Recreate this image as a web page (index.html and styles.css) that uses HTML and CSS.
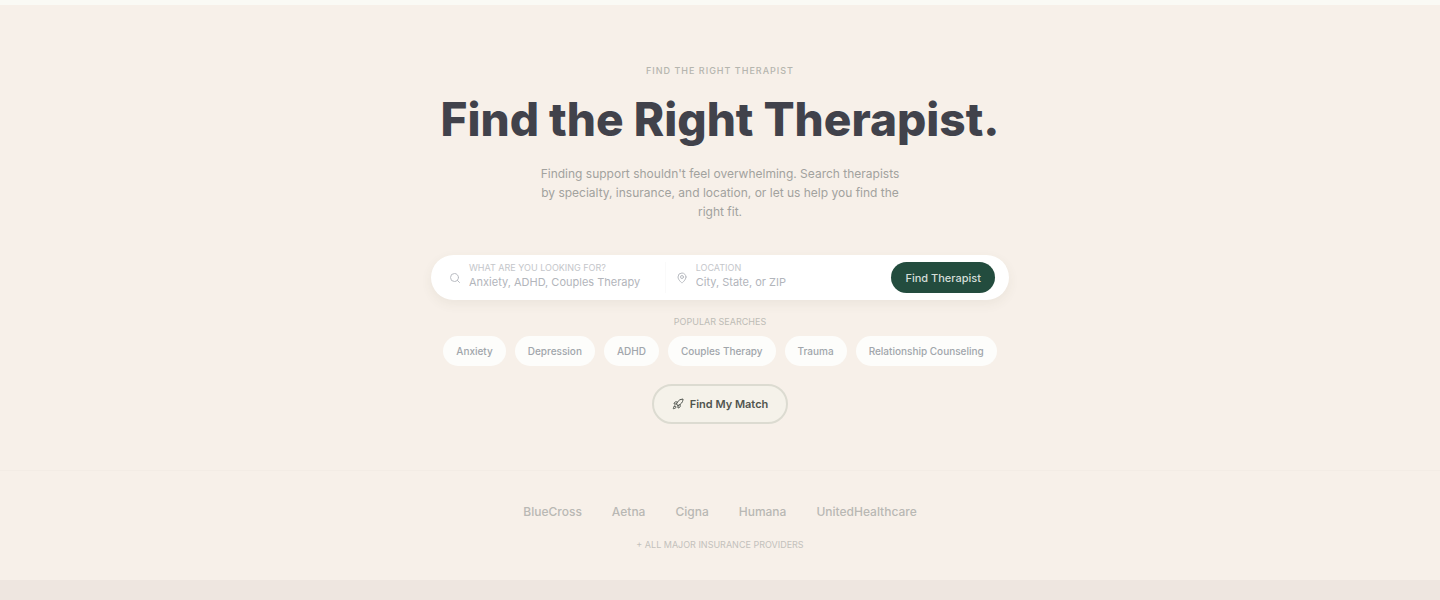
FILE: index.html
```html
<!DOCTYPE html>
<html lang="en">
<head>
    <meta charset="UTF-8">
    <meta name="viewport" content="width=device-width, initial-scale=1.0">
    <title>Find the Right Therapist</title>
    <link rel="stylesheet" href="styles.css">
</head>
<body>
    <main class="hero">
        <p class="eyebrow">Find the right therapist</p>
        <h1>Find the Right Therapist.</h1>
        <p class="intro">Finding support shouldn't feel overwhelming. Search therapists by specialty, insurance, and location, or let us help you find the right fit.</p>

        <form class="search">
            <div class="field field-wide">
                <svg class="icon" viewBox="0 0 24 24"><circle cx="11" cy="11" r="8"/><path d="m21 21-4.3-4.3"/></svg>
                <div class="field-text">
                    <label for="concern">What are you looking for?</label>
                    <input id="concern" type="text" placeholder="Anxiety, ADHD, Couples Therapy">
                </div>
            </div>
            <div class="field">
                <svg class="icon" viewBox="0 0 24 24"><path d="M20 10c0 6-8 12-8 12s-8-6-8-12a8 8 0 0 1 16 0Z"/><circle cx="12" cy="10" r="3"/></svg>
                <div class="field-text">
                    <label for="location">Location</label>
                    <input id="location" type="text" placeholder="City, State, or ZIP">
                </div>
            </div>
            <button type="submit" class="search-btn">Find Therapist</button>
        </form>

        <p class="popular">Popular searches</p>
        <div class="tags">
            <button type="button">Anxiety</button>
            <button type="button">Depression</button>
            <button type="button">ADHD</button>
            <button type="button">Couples Therapy</button>
            <button type="button">Trauma</button>
            <button type="button">Relationship Counseling</button>
        </div>

        <button type="button" class="match-btn">
            <svg class="icon" viewBox="0 0 24 24"><path d="M4.5 16.5c-1.5 1.3-2 5-2 5s3.700-.5 5-2c.7-.8.7-2.100-.1-2.900a2.200 2.200 0 0 0-2.900-.1zM12 15l-3-3a22 22 0 0 1 2-4A12.900 12.900 0 0 1 22 2c0 2.700-.8 7.500-6 11a22 22 0 0 1-4 2zM9 12H4s.5-3 2-4c1.600-1.100 5 0 5 0M12 15v5s3-.5 4-2c1.100-1.600 0-5 0-5"/></svg>
            Find My Match
        </button>
    </main>

    <section class="insurance">
        <ul>
            <li>BlueCross</li>
            <li>Aetna</li>
            <li>Cigna</li>
            <li>Humana</li>
            <li>UnitedHealthcare</li>
        </ul>
        <p>+ All major insurance providers</p>
    </section>
</body>
</html>
```

FILE: styles.css
```css
* {
    box-sizing: border-box;
}
body {
    margin: 0;
    border-top: 5px solid #fafaf5;
    background-color: #eee6e0;
    color: #41424b;
    font-family: Inter, "Liberation Sans", sans-serif;
}
h1, p, ul {
    margin: 0;
    padding: 0;
}
button, input {
    font-family: inherit;
}
.icon {
    flex: none;
    width: 12px;
    height: 12px;
    fill: none;
    stroke: currentColor;
    stroke-width: 2;
    stroke-linecap: round;
    stroke-linejoin: round;
}
.hero {
    display: flex;
    flex-direction: column;
    align-items: center;
    padding: 60px 24px 46px;
    background-color: #f7f0e9;
    text-align: center;
}
.eyebrow {
    color: #b5b5ae;
    font-size: 9px;
    line-height: 12px;
    font-weight: 500;
    letter-spacing: 1px;
    text-transform: uppercase;
}
h1 {
    margin-top: 12px;
    font-size: 46px;
    line-height: 60px;
    font-weight: 800;
}
.intro {
    max-width: 368px;
    margin-top: 15px;
    color: #a2a29e;
    font-size: 12px;
    line-height: 19px;
}
.search {
    display: flex;
    align-items: center;
    width: 100%;
    max-width: 578px;
    margin-top: 34px;
    padding: 7px 14px 7px 18px;
    border-radius: 24px;
    background-color: #fff;
    box-shadow: 0 4px 12px rgba(80, 90, 60, 0.07);
}
.field {
    display: flex;
    flex: 1;
    align-items: center;
    gap: 8px;
    min-width: 0;
    color: #b9bcc2;
    text-align: left;
}
.field-wide {
    margin-right: 10px;
    border-right: 1px solid #fafafa;
}
.field-text {
    flex: 1;
    min-width: 0;
}
.field label {
    display: block;
    color: #c4c6ca;
    font-size: 9px;
    line-height: 12px;
    text-transform: uppercase;
}
.field input {
    display: block;
    width: 100%;
    height: 16px;
    margin-bottom: 3px;
    padding: 0;
    border: none;
    outline: none;
    background: none;
    color: #41424b;
    font-size: 11px;
}
.field input::placeholder {
    color: #b2b5bb;
}
.search-btn {
    height: 31px;
    padding: 0 14px;
    border: none;
    border-radius: 16px;
    background-color: #234c3e;
    color: #d5ded9;
    font-size: 11px;
    font-weight: 500;
    cursor: pointer;
}
.popular {
    margin-top: 16px;
    color: #bdbcb6;
    font-size: 9px;
    line-height: 12px;
    text-transform: uppercase;
}
.tags {
    display: flex;
    flex-wrap: wrap;
    justify-content: center;
    gap: 9px;
    margin-top: 8px;
}
.tags button {
    height: 30px;
    padding: 0 13px;
    border: none;
    border-radius: 15px;
    background-color: #fdfdfb;
    color: #a1a6ab;
    font-size: 10px;
    font-weight: 500;
    cursor: pointer;
}
.match-btn {
    display: flex;
    align-items: center;
    gap: 6px;
    height: 40px;
    margin-top: 18px;
    padding: 0 18px;
    border: 2px solid #dcdbd1;
    border-radius: 20px;
    background-color: #f5f2ea;
    color: #50554f;
    font-size: 11px;
    font-weight: 600;
    cursor: pointer;
}
.insurance {
    padding: 32px 24px 29px;
    border-top: 1px solid #f3ece5;
    background-color: #f7f0e9;
    text-align: center;
}
.insurance ul {
    display: flex;
    flex-wrap: wrap;
    justify-content: center;
    gap: 30px;
    list-style: none;
    color: #b9b8b4;
    font-size: 12px;
    line-height: 18px;
    font-weight: 500;
}
.insurance p {
    margin-top: 18px;
    color: #c3c1bc;
    font-size: 9px;
    line-height: 12px;
    text-transform: uppercase;
}
```
